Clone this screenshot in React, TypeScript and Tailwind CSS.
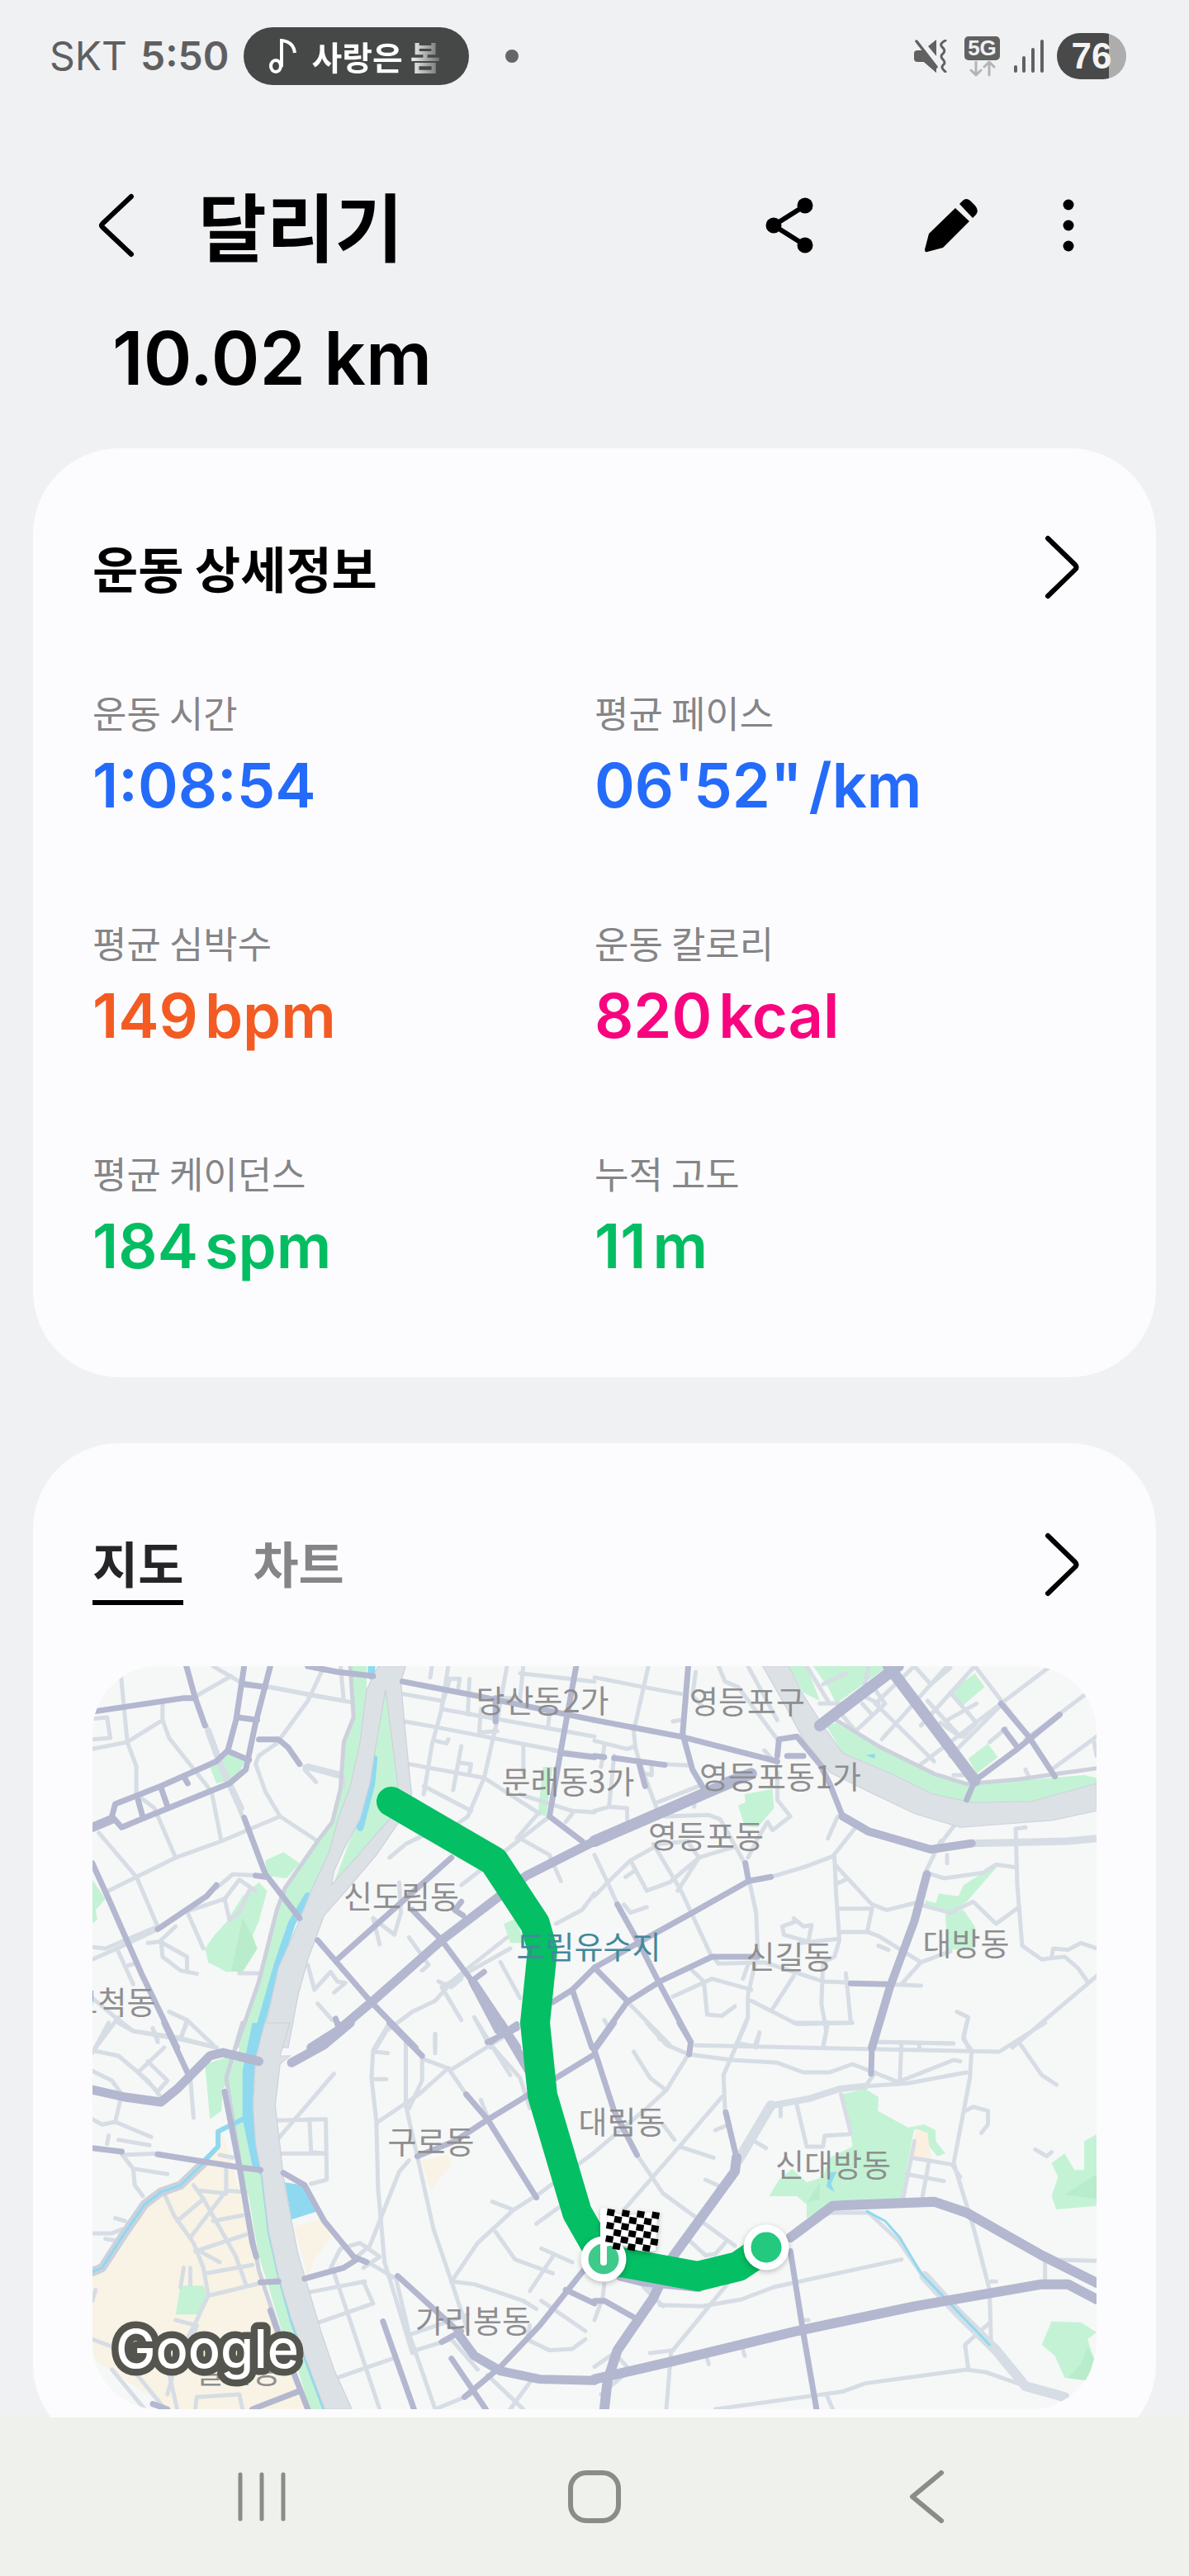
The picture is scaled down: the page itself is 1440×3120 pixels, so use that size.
import type { ReactNode } from "react";

const KR = "font-['Noto_Sans_CJK_KR',sans-serif]";

function Chevron({ dir = "right", className }: { dir?: "left" | "right"; className: string }) {
  return (
    <svg viewBox="0 0 44 80" className={className} fill="none" stroke="currentColor" strokeWidth="6" strokeLinecap="round" strokeLinejoin="round" aria-hidden="true">
      <path d={dir === "right" ? "M5 5 L38 37 Q41 40 38 43 L5 75" : "M40 5 L5 38 Q3 40 5 42 L40 75"} />
    </svg>
  );
}

function StatusBar() {
  return (
    <div className="flex h-[136px] shrink-0 items-center pr-[76px] pl-[60px] text-[#5f5f60]">
      <span className="text-[48px] leading-none">SKT</span>
      <span className="ml-[16px] text-[48px] leading-none font-semibold">5:50</span>
      <div className="ml-[18px] flex h-[70px] items-center rounded-full bg-[#464747] pr-[34px] pl-[30px] text-white">
        <svg viewBox="0 0 34 42" className="h-[42px] w-[34px]" fill="none" stroke="currentColor" strokeWidth="4" aria-hidden="true">
          <ellipse cx="9" cy="33" rx="6" ry="7" />
          <path d="M16 34 V2 C25 3 31 8 32 17" />
        </svg>
        <span className={`${KR} ml-[18px] bg-linear-to-r from-white from-75% to-[#6a6b6b] bg-clip-text text-[40px] leading-[56px] font-bold text-transparent`}>사랑은 봄</span>
      </div>
      <span className="ml-[44px] size-[16px] rounded-full bg-[#666]" />
      <div className="ml-auto flex items-center">
        <svg viewBox="0 0 40 40" className="size-[40px]" aria-hidden="true">
          <path d="M4 13 H9 L27 37 V40 L12 27 H4 Q0 27 0 23 V17 Q0 13 4 13Z M17 8 L27 0 V20Z" fill="#616162" />
          <path d="M7 13 H13 L27 32 V40 L12 27 H5Z" fill="#616162" />
          <path d="M3 2 L27 33" stroke="#616162" strokeWidth="3.5" strokeLinecap="round" />
          <path d="M11 6 L28 28" stroke="#f0f1f3" strokeWidth="2.5" />
          <path d="M38 1 Q30 5 34 9 Q39 13 35 17 Q31 20 35 24 Q39 28 35 31 Q32 34 38 39" fill="none" stroke="#616162" strokeWidth="3" strokeLinecap="round" />
        </svg>
        <div className="ml-[21px] flex w-[43px] flex-col items-center">
          <span className="flex h-[29px] w-full items-center justify-center rounded-[5px] bg-[#616162] font-['Liberation_Sans',sans-serif] text-[26px] leading-none font-bold text-[#f0f1f3]">5G</span>
          <svg viewBox="0 0 32 20" className="h-[20px] w-[32px]" fill="none" stroke="#b4b4b6" strokeWidth="3" strokeLinecap="round" strokeLinejoin="round" aria-hidden="true">
            <path d="M8 2 V18 M2 12 L8 18 L14 12 M24 18 V2 M18 8 L24 2 L30 8" />
          </svg>
        </div>
        <svg viewBox="0 0 38 40" className="ml-[16px] h-[40px] w-[38px]" stroke="#616162" strokeWidth="4" strokeLinecap="round" aria-hidden="true">
          <path d="M3 33 V38 M13 22 V38 M24 12 V38 M35 2 V38" />
        </svg>
        <div className="ml-[15px] flex h-[56px] w-[84px] items-center justify-center rounded-full bg-linear-to-r from-[#494949] from-75% to-[#adadad] to-75% font-['Liberation_Sans',sans-serif] text-[44px] leading-none font-bold text-[#f3f3f4]">76</div>
      </div>
    </div>
  );
}

function Header() {
  return (
    <header className="shrink-0">
      <div className="mt-[87px] flex h-[100px] items-center pr-[134px] pl-[119px]">
        <button type="button" aria-label="뒤로"><Chevron dir="left" className="h-[80px] w-[44px]" /></button>
        <h1 className={`${KR} ml-[77px] pb-[4px] text-[90px] leading-[96px] font-bold`}>달리기</h1>
        <button type="button" aria-label="공유" className="ml-auto">
          <svg viewBox="0 0 60 68" className="h-[68px] w-[60px]" aria-hidden="true">
            <path d="M49 10 L11 34 L49 58" fill="none" stroke="#000" strokeWidth="6" />
            <circle cx="11" cy="34" r="9.500" /><circle cx="49" cy="10" r="9.500" /><circle cx="49" cy="58" r="9.500" />
          </svg>
        </button>
        <button type="button" aria-label="편집" className="ml-[133px]">
          <svg viewBox="0 0 66 66" className="size-[66px]" aria-hidden="true">
            <path d="M38 12 L55 28 L23 60 L4 65 Q1 66 1 62 L6 43Z" />
            <path d="M43 7 L47 3 Q51 -1 56 3 L62 9 Q67 15 63 20 L59 24Z" />
          </svg>
        </button>
        <button type="button" aria-label="더보기" className="ml-[97px]">
          <svg viewBox="0 0 24 64" className="h-[64px] w-[24px]" aria-hidden="true">
            <circle cx="12" cy="7" r="6.500" /><circle cx="12" cy="32" r="6.500" /><circle cx="12" cy="57" r="6.500" />
          </svg>
        </button>
      </div>
      <p className="mt-[61px] pl-[136px] text-[89px] leading-[100px] font-semibold">10.02 km</p>
    </header>
  );
}

const STATS = [
  { label: "운동 시간", value: "1:08:54", unit: "", color: "text-[#256bfa]" },
  { label: "평균 페이스", value: "06'52\"", unit: "/km", color: "text-[#256bfa]" },
  { label: "평균 심박수", value: "149", unit: "bpm", color: "text-[#f45b22]" },
  { label: "운동 칼로리", value: "820", unit: "kcal", color: "text-[#f9047f]" },
  { label: "평균 케이던스", value: "184", unit: "spm", color: "text-[#04bd62]" },
  { label: "누적 고도", value: "11", unit: "m", color: "text-[#04bd62]" },
];

function Details() {
  return (
    <section className="mx-[40px] mt-[59px] shrink-0 rounded-[104px] bg-[#fcfcfe] px-[72px] pt-[94px] pb-[119px]">
      <div className="flex h-[100px] items-center justify-between pr-[20px]">
        <h2 className={`${KR} text-[60px] leading-[80px] font-bold`}>운동 상세정보</h2>
        <button type="button" aria-label="운동 상세정보 열기"><Chevron className="h-[80px] w-[44px]" /></button>
      </div>
      <dl className="mt-[96px] grid grid-cols-2 gap-y-[121px]">
        {STATS.map((s) => (
          <div key={s.label}>
            <dt className={`${KR} text-[45px] leading-[60px] text-[#858587]`}>{s.label}</dt>
            <dd className={`${s.color} mt-[18px] flex gap-[8px] text-[74px] leading-[80px] font-semibold`}>
              <span>{s.value}</span>
              {s.unit && <span>{s.unit}</span>}
            </dd>
          </div>
        ))}
      </dl>
    </section>
  );
}

function Sheet({ x, y, children }: { x: number; y: number; children: ReactNode }) {
  return <g transform={`translate(${x} ${y}) scale(0.3954 0.3333)`}>{children}</g>;
}

function Lines({ color, width, d }: { color: string; width: number; d: string[] }) {
  return (
    <g fill="none" stroke={color} strokeWidth={width} strokeLinecap="round" strokeLinejoin="round">
      {d.map((p) => <polyline key={p} points={p} vectorEffect="non-scaling-stroke" />)}
    </g>
  );
}

function Areas({ color, d }: { color: string; d: string[] }) {
  return <g fill={color}>{d.map((p) => <polygon key={p} points={p} />)}</g>;
}

const MINOR = "#d6dde4";
const MAJOR = "#b3b7cf";
const PARK = "#c3f3d4";
const WATER = "#8fd9f0";
const LAND = "#f8f3e5";
const HIGHWAY = "#dce1e5";
const EDGE = "#ccd1dc";

const NW = { x: -12, y: -18 };
const NE = { x: 608, y: -18 };
const SW = { x: -12, y: 432 };
const SE = { x: 608, y: 432 };

const minorNW = [
  "115,54 137,330 165,420 165,520 220,570 285,750", "30,355 137,330 245,250 245,190", "245,250 265,315 395,510 425,690",
  "30,320 85,315 75,240 30,245", "400,54 480,110 700,160 825,185", "345,165 455,90", "740,54 690,180 610,310", "600,330 540,380 530,410 560,510 605,600 720,690",
  "605,600 425,690 285,750 80,870", "50,660 165,820 230,1000 140,1045 70,1080 30,1075", "230,1010 105,1080 30,1120", "105,1080 155,1210", "130,1145 160,1135",
  "380,270 425,420 490,600", "320,945 370,1080", "320,945 435,900 480,830 530,870", "410,860 460,810 540,815", "435,900 450,975 480,950 510,870",
  "285,1000 240,1050 245,1110 300,1160 350,1172", "200,1060 240,1055", "245,1060 320,1110 320,1160", "480,1170 540,1170", "680,420 800,460 800,490", "680,430 715,475",
  "1120,54 1100,210 1070,340 1045,520", "1070,54 1065,95", "1185,100 1180,230", "980,155 1100,180", "1100,210 1568,310", "985,255 1080,275 1450,360", "1220,210 1215,295 1270,290",
  "1300,54 1270,250 1230,460 1180,600 1110,660", "1350,54 1340,170 1260,170", "1000,410 1230,460", "1350,340 1350,440", "1230,460 1400,590", "1045,490 1190,580", "1100,200 1125,100 1155,100 1150,140",
  "1080,325 1115,335 1120,320", "1160,345 1135,505", "1155,405 1190,410 1185,440", "1568,110 1340,80", "1430,230 1425,280", "1568,585 1500,580 1340,520", "1500,590 1480,620",
  "1568,380 1440,360", "1430,600 1160,850", "1340,680 1430,740 1465,835", "1060,660 990,700 940,750", "1395,590 1330,680", "970,840 975,950 955,1030 890,970", "890,970 910,1065",
  "1000,1040 1060,1140 1040,1160", "1568,880 1530,940 1450,990", "1300,1040 1140,1190 1080,1270 1010,1310 930,1380 900,1440", "1310,1080 1100,1220 1160,1340", "690,1140 710,1230 760,1165 780,1200 805,1205 770,1240",
  "720,1280 765,1340", "1090,1200 1130,1220 1160,1190", "1280,1130 1340,1260", "1200,1330 1250,1440", "1080,1390 1080,1440", "30,1260 100,1330 155,1380 300,1410 410,1440", "110,1330 40,1440", "265,1310 320,1340 400,1430", "320,1340 300,1410",
  "215,1370 230,1420", "575,130 800,180 790,54",
];
const majorNW = [
  "40,218 310,170 345,170", "318,54 345,170 375,270", "495,54 470,250 445,360 410,400 240,490 100,555 90,600 120,640 180,610 450,480 500,430 530,260 575,54", "495,120 560,130", "475,240 535,250",
  "450,365 510,395", "310,455 322,480", "240,495 262,570", "170,540 185,605", "540,320 600,320 630,350 665,410", "690,54 780,75 890,90", "30,640 90,610",
  "495,605 560,810 665,970", "530,815 560,820", "30,770 80,900 180,1170 290,1440", "230,1010 380,890 410,850", "980,110 1200,160 1568,250", "1512,54 1465,360 1430,600 1530,690", "1465,370 1568,385",
  "720,1050 880,1270 1020,1440", "1130,750 780,1120", "1010,940 1100,1050 1200,1210 1330,1440", "1160,910 1140,940 1165,960", "1230,1165 1190,1200 1270,1380", "775,1335 785,1370", "1330,1355 1250,1420", "1568,1150 1500,1230 1440,1275", "1500,1230 1560,1440", "1265,170 1265,255",
];
const minorNE = [
  "0,95 150,130 265,155", "165,54 120,290 125,345 100,355 0,325", "310,75 300,160 330,200", "380,54 400,110 440,130 560,320", "470,54 560,250", "240,255 260,250", "30,345 20,420", "60,380 45,560",
  "0,580 45,565 100,570 100,610", "125,350 140,410 190,570 215,600 350,595 385,610 460,770", "175,410 175,450 140,440", "215,410 290,415", "190,550 330,485", "310,520 305,565", "560,440 560,540 600,600 545,650 530,620 500,680 470,750",
  "0,740 40,840 70,920", "0,890 40,840 110,760 200,700 290,690", "110,760 160,870 230,840 320,750 430,710", "180,700 265,870 355,1100 380,1135 520,1130 700,1200 900,1210 1000,1215", "320,750 255,870", "320,750 290,700", "90,920 110,950 160,930", "95,820 120,800",
  "540,820 640,785 730,745 800,640", "745,600 715,680", "735,745 740,880 750,1050 735,1110 700,1130 695,1280 710,1380 700,1440", "740,780 850,920 895,940 980,915 1090,950 1160,910 1230,990 1300,930", "750,935 850,935 835,1020 870,1035 1000,1130", "755,1020 840,1020", "770,830 740,845",
  "475,840 495,950 500,1090 470,1250 470,1330 430,1440", "610,970 640,1000 665,995 655,1055 580,1030 575,1000 620,980", "630,1060 750,1045", "1090,1090 1000,1130 940,1210", "870,1070 900,1085", "770,1170 785,1350 620,1355 480,1270", "610,1180 545,1300", "470,1140 455,1190", "290,1150 335,1200 345,1320 390,1325 430,1290",
  "240,1255 360,1190 480,1230", "110,1285 230,1430", "30,1340 40,1360", "190,1380 200,1410", "505,1385 495,1440", "1040,730 1110,620", "1060,690 1015,800", "1080,740 1080,770", "1030,810 1070,825 1190,805 1230,775 1290,785", "1320,640 1290,645 1295,850 1310,1070 1370,1120 1400,1115 1440,1110 1480,1150 1510,1200",
  "1400,1115 1405,1080 1450,1085 1490,1060 1538,1080", "1538,1180 1280,1440", "1110,1310 1145,1330 1130,1400 1145,1440", "870,1420 1100,1425", "650,54 720,190", "770,80 700,120", "690,190 750,190", "750,220 800,290 890,190 860,140", "840,54 820,160 870,190", "820,190 850,230",
  "980,54 860,190 1040,400", "1080,54 880,320", "1080,250 1170,190", "1020,180 1120,310 1060,260", "1160,60 1000,270", "1090,150 1170,260 1130,310", "1165,54 1240,170 1330,310", "1250,190 1090,380", "1390,60 1000,410", "1500,160 1320,320", "1538,310 1400,430", "1530,330 1538,380", "1210,330 1260,280", "1170,450 1100,450", "1320,430 1330,455",
  "980,54 1030,120 1090,60", "520,360 560,410",
];
const majorNE = [
  "0,250 265,310 560,400", "287,54 270,300 300,430 340,510", "0,380 30,385", "60,388 215,413", "135,400 155,490", "560,380 565,320 620,310 690,410 720,480 760,600 840,655 1030,720 1155,698", "590,380 640,380",
  "462,770 472,835 540,820", "472,835 300,950 140,1055", "70,920 145,1080 200,1210 295,1420", "0,1150 100,1270", "140,1055 0,1150", "500,1110 360,1110 200,1200 100,1275 0,1440", "785,1207 900,1210", "1245,190 1330,310 1410,455",
  "1425,230 1290,360 1165,470 1140,540", "1255,285 1290,340",
];
const minorSW = [
  "80,0 30,110", "30,100 110,120 200,210 240,270", "110,0 155,30 300,55 410,90", "215,20 230,60", "320,0 300,55", "250,90 170,180 230,250 260,210 200,140", "30,175 90,210 120,260 100,360 60,370 30,350", "100,360 210,415", "330,200 340,345", "80,410 75,440", "110,425 205,445", "120,480 230,475 360,500",
  "125,485 155,530 260,550", "155,530 160,590 185,630", "30,765 90,765 120,750", "100,710 130,720", "70,785 95,790", "250,620 280,700 340,800 370,890 385,990 350,1080", "340,590 370,640 290,720", "440,530 440,610 330,780", "370,640 470,850 500,950", "440,610 500,615", "360,610 440,620", "345,830 500,770", "390,990 600,930", "380,910 520,880", "490,700 400,720", "420,480 460,490",
  "590,355 745,350 748,570 700,585", "695,350 700,470 745,475 610,475", "770,185 600,420", "940,0 890,100 885,200 900,360 905,600 925,870", "895,105 935,110", "895,205 930,205", "990,60 990,300 1030,510 1075,750 1130,940 1180,1120", "1080,45 1080,110", "1040,130 1040,210 1000,310", "1040,130 1130,170 1250,80 1360,0", "1120,165 1030,260 905,360", "1120,165 1175,260", "1210,0 1310,190", "1220,280 1240,340", "1250,80 1340,200 1370,310", "1568,470 1400,620 1320,680 1210,800 1130,940",
  "1000,500 970,540 880,810 830,860", "1255,650 1320,680", "1460,670 1390,730", "1265,760 1325,860 1440,910", "1405,820 1500,870", "1440,850 1370,975", "1130,940 1200,950 1350,1010", "1370,1100 1360,1150 1430,1190 1500,1185 1540,1150", "1405,1010 1540,1120", "1350,1010 1390,1040",
  "860,860 960,930 1000,1130 1080,1404", "765,890 830,1120 910,1404", "925,870 1010,1200", "690,980 865,940", "720,1090 890,1020 860,940", "780,1290 950,1220", "1010,1130 1180,1060", "1020,1190 1130,1150 1210,1260", "1080,1404 1190,1350", "1380,1290 1310,1404", "1240,1280 1350,1404", "760,890 790,820 850,800 910,850 860,890", "345,1404 350,1360 480,1350 490,1404",
  "40,970 30,1010", "30,1150 120,1190 260,1250 290,1404", "140,1240 250,1400", "90,1260 190,1404", "130,1220 290,1210", "350,1080 290,1220 260,1350", "285,1080 350,1100 320,1200", "310,890 300,960", "330,890 330,950", "360,830 420,870",
];
const majorSW = [
  "250,0 325,190", "30,455 120,468", "230,478 480,525 545,535", "435,250 480,520 520,800 532,850", "615,545 680,590 740,720 830,850 870,870", "840,860 800,890 680,930", "545,943 600,940",
  "940,0 1040,120", "1175,260 1240,350 1390,635", "1025,485 1140,430 1230,360 1568,115", "780,0 800,20", "1240,70 1330,20", "1280,0 1370,180", "965,920 1150,1120", "1100,1160 1160,1120", "575,1045 600,1130 690,1404", "920,1085 1015,1404", "1130,1220 1235,1404", "1568,850 1400,1100 1280,1250 1170,1360", "520,1404 660,1340", "215,1385 260,1404", "1480,970 1568,1020",
];
const minorSE = [
  "160,0 220,80 290,115 420,135 560,145 640,180 720,180 790,150 930,215 1100,135 1120,140", "465,0 395,190 400,320", "440,75 490,85 505,40", "310,82 720,92 1240,105 1380,0", "715,0 700,90", "610,0 790,0", "870,70 1095,75", "940,80 935,215", "995,80 995,95", "1140,0 1130,60 1155,100 1150,200 1100,510 1160,740 1210,970 1215,1180", "1300,70 1370,190 1415,225",
  "860,180 830,230", "830,230 960,220 1140,180", "120,105 170,200 220,245 290,110", "220,245 160,310 0,470", "390,270 260,450 90,680", "260,450 365,490", "210,370 245,425", "130,480 210,620 430,810", "570,300 570,340", "620,300 650,450 700,450 705,410 780,405", "755,260 785,400", "490,430 525,455", "340,570 385,595", "370,390 400,375",
  "290,790 340,845 370,840 400,800", "980,430 970,490 1095,515", "970,490 945,640", "955,550 1070,575", "1025,500 1005,630", "1135,320 1160,305 1205,320 1205,370 1185,400", "1350,460 1385,485 1400,470", "1095,515 1120,560",
  "600,770 720,690 840,690 930,790 1000,910", "200,1025 330,1030 450,1005 550,960 940,860", "420,930 330,1060 240,1190", "170,1200 240,1190", "200,970 150,960 210,1030", "30,950 25,1000 0,1080", "235,1190 220,1404", "370,1404 760,1340 830,1310 1140,1260 1200,1270 1320,1320", "710,1350 730,1404", "1145,1260 1135,1170 1210,1090", "1380,870 1380,930", "1400,860 1538,865",
  "640,1080 655,1080", "455,1190 460,1210", "345,1220 350,1240", "1215,940 1230,940", "0,1250 60,1200 100,1250", "20,1350 110,1260",
];
const majorSE = [
  "260,0 295,70 290,115", "0,100 60,320 130,480", "0,100 60,0", "870,0 850,80 847,185", "402,325 435,490", "600,830 640,1130 680,1404", "0,1010 30,1010 120,1070",
];

const LABELS = [
  ["당산동2가", 545, 42], ["영등포구", 793, 43], ["문래동3가", 576, 140], ["영등포동1가", 833, 134], ["영등포동", 743, 206], ["신도림동", 374, 279],
  ["신길동", 844, 352], ["대방동", 1058, 336], ["고척동", 24, 407], ["구로동", 410, 576], ["대림동", 641, 552], ["신대방동", 897, 604], ["가리봉동", 461, 793], ["철산동", 176, 854],
] as const;

const FLAG_CELLS = Array.from({ length: 42 }, (_, i) => ({ c: i % 7, r: Math.floor(i / 7) })).filter(({ c, r }) => (c + r) % 2 === 0);

function RouteMap() {
  return (
    <svg viewBox="0 0 1216 900" className="block w-full rounded-[80px] bg-[#f6f7f7]" role="img" aria-label="달리기 경로 지도">
      <Sheet {...NW}>
        <Areas color={PARK} d={[
          "820,54 870,54 870,140 850,330 820,490 755,730 700,870 660,960 540,1440 470,1440 540,1200 595,940 620,860 720,690 765,620 790,500 800,330 830,240",
          "450,370 500,395 470,465 410,480 390,420", "560,760 615,730 665,770 625,825 565,815", "540,840 565,870 540,980 520,1035 535,1080 490,1165 440,1165 385,1130 375,1080 405,1030 440,985 490,890", "30,830 70,900 40,940 45,975 30,990", "1410,420 1440,420 1420,600 1395,590", "1290,990 1330,970 1350,1060 1310,1060",
        ]} />
        <Areas color="#b8ecca" d={["490,970 520,1035 535,1080 490,1165 455,1160 465,1110"]} />
      </Sheet>
      <Sheet {...NE}>
        <Areas color={PARK} d={[
          "595,54 650,54 690,180 640,150", "670,54 900,54 740,190 715,130", "710,270 740,260 870,350 1040,450 1140,485 1300,470 1500,450 1538,460 1538,480 1340,545 1160,550 1040,520 900,440 760,370", "1090,145 1165,80 1195,130 1130,195", "1145,390 1205,335 1235,385 1170,445",
          "460,520 545,500 550,570 500,640 460,635 440,560 462,550", "1190,805 1235,780 1140,910 1090,950 1010,930 1015,905 1045,915 1055,880 1115,890 1130,850", "1075,955 1130,940 1165,1000 1165,1080 1080,1085",
        ]} />
      </Sheet>
      <Sheet {...SW}>
        <Areas color={LAND} d={["425,390 460,520 500,700 540,870 570,1000 600,1130 690,1404 270,1404 30,1220 30,900 60,890 120,780 200,640 310,590 380,500 410,450", "645,740 740,710 760,780 710,860 690,920 670,830", "1035,500 1120,480 1130,510 1068,610"]} />
        <Areas color={PARK} d={["375,150 440,125 490,150 430,240 425,320 390,350", "300,955 370,955 385,1010 350,1060 285,1060", "505,0 470,130 440,220 455,310 480,500 510,640 540,850 570,960 610,1120 660,1260 695,1404 735,1404 690,1240 640,1080 600,920 570,760 550,560 520,480 495,340 490,170 520,0"]} />
        <Areas color={WATER} d={["520,0 560,0 530,130 522,300 530,440 550,560 520,520 490,350 490,170", "620,580 675,590 720,685 640,715"]} />
      </Sheet>
      <Sheet {...SE}>
        <Areas color={PARK} d={["755,260 830,240 870,270 868,320 960,380 1010,370 1045,390 1045,430 1075,475 1050,485 1020,440 980,385 970,440 940,640 720,660 650,710 650,660 620,630 535,630 565,570 605,530 650,580 700,560 720,490 790,450 780,350", "1538,405 1538,665 1415,678 1400,630 1420,560 1400,510 1440,475 1470,535 1500,535 1500,430", "1400,1085 1490,1088 1538,1125 1510,1150 1530,1220 1510,1300 1440,1290 1410,1210 1370,1170"]} />
        <Areas color="#b8ecca" d={["1538,550 1538,640 1440,625", "690,580 690,640 650,655", "1510,1180 1530,1220 1510,1300 1450,1290 1490,1240"]} />
        <Areas color="#fbefe0" d={["985,385 1020,400 1030,490 970,490"]} />
        <Areas color={WATER} d={["720,545 742,540 725,585 735,615 710,595"]} />
      </Sheet>

      <Sheet {...NW}><Lines color={MINOR} width={5} d={minorNW} /><Lines color={MINOR} width={8} d={["385,290 425,420 485,570", "690,420 790,450"]} /></Sheet>
      <Sheet {...NE}><Lines color={MINOR} width={5} d={minorNE} /><Areas color={WATER} d={["830,378 860,372 858,390"]} /></Sheet>
      <Sheet {...SW}><Lines color={MINOR} width={5} d={minorSW} /></Sheet>
      <Sheet {...SE}><Lines color={MINOR} width={5} d={minorSE} /></Sheet>

      <Sheet {...NW}>
        <Lines color={EDGE} width={5} d={["820,54 830,240 800,330 790,500 765,620 720,690 620,860 595,940 540,1200 470,1440"]} />
        <Areas color={PARK} d={["928,120 965,480 955,600 762,860 700,870 770,840 860,560 890,330"]} />
        <Lines color={WATER} width={9} d={["885,54 885,90", "892,390 885,480 850,640", "690,890 640,990 597,1140 525,1440"]} />
        <path fillRule="evenodd" fill={HIGHWAY} stroke={EDGE} strokeWidth="3" d="M905 54 L870 140 L850 330 L820 490 L785 600 L755 730 L700 870 L660 990 L600 1150 L545 1440 L630 1440 L660 1250 L690 1120 L740 960 L800 880 L900 740 L975 610 L1008 520 L1000 430 L985 250 L975 110 L990 54 Z M928 140 L965 480 L955 590 L910 650 L830 760 L762 850 L770 800 L800 720 L850 610 L880 480 L900 330 Z" />
      </Sheet>
      <Sheet {...SW}>
        <Lines color={EDGE} width={5} d={["490,0 440,200 455,310 500,640 540,900 610,1150 690,1404"]} />
        <Lines color={EDGE} width={11} d={["370,510 300,590 240,615 190,660 120,780 60,890 30,905"]} />
        <Lines color={WATER} width={3} d={["370,510 300,590 240,615 190,660 120,780 60,890 30,905", "550,560 570,760 600,920 640,1090 690,1250 738,1404"]} />
        <Lines color={WATER} width={6} d={["500,345 415,395 415,450 370,505"]} />
        <path fill={HIGHWAY} stroke={EDGE} strokeWidth="3" d="M558 0 L530 130 L522 300 L530 440 L550 560 L570 760 L600 920 L640 1080 L690 1240 L742 1404 L825 1404 L770 1260 L730 1120 L690 960 L660 840 L640 720 L615 560 L605 450 L590 300 L605 150 L635 120 L605 120 L635 0 Z" />
      </Sheet>
      <Sheet {...NE}>
        <path fill={HIGHWAY} stroke={EDGE} strokeWidth="3" d="M515 54 L595 54 L640 160 L700 270 L760 370 L900 440 L1040 520 L1160 550 L1340 545 L1538 480 L1538 580 L1400 615 L1120 640 L980 590 L840 510 L720 440 L640 320 L590 210 Z" />
        <Lines color={EDGE} width={5} d={["740,250 870,345 1040,445 1140,482 1300,465 1538,425"]} />
        <Lines color={MINOR} width={9} d={["1155,698 1450,690 1538,680"]} />
        <Lines color={MAJOR} width={14} d={["930,54 690,270", "900,54 1165,470", "0,690 350,510 420,475", "400,480 480,445"]} />
        <Lines color={MAJOR} width={10} d={["1018,810 980,980 905,1220 850,1440", "760,600 840,655 1030,720 1155,698"]} />
      </Sheet>
      <Sheet {...NW}><Lines color={MAJOR} width={7} d={majorNW} /><Lines color={MAJOR} width={11} d={["1568,690 1360,815 1100,1050 890,1270 780,1380 700,1440", "30,640 90,610", "1200,1210 1330,1440"]} /></Sheet>
      <Sheet {...NE}><Lines color={MAJOR} width={7} d={majorNE} /></Sheet>
      <Sheet {...SW}><Lines color={MAJOR} width={7} d={majorSW} /><Lines color={MAJOR} width={11} d={["820,0 740,80 640,145", "1150,1130 1200,1210 1280,1265 1400,1295 1568,1300", "30,243 130,270 240,288 290,240 390,120 430,108 540,140", "1280,0 1370,180"]} /></Sheet>
      <Sheet {...SE}>
        <Lines color={MINOR} width={12} d={["1010,920 1110,1050 1230,1190 1320,1320 1440,1360", "540,300 440,500"]} />
        <Lines color={MINOR} width={8} d={["830,230 750,240 660,275 545,300"]} />
        <Lines color={WATER} width={3} d={["835,685 890,720 935,780 1000,910 1210,1170"]} />
        <Lines color={MAJOR} width={7} d={majorSE} />
        <Lines color={MAJOR} width={12} d={["435,490 430,540 240,850 180,1000 70,1190 40,1300 30,1404", "0,1295 240,1230 620,1120 980,1030 1370,950 1450,950 1538,1005", "600,780 730,665 1040,650 1140,690 1370,845 1538,945", "80,920 150,940 320,960"]} />
      </Sheet>

      <g fill="none" stroke="#04bf64" strokeWidth="36" strokeLinecap="round" strokeLinejoin="round">
        <polyline points="362,164 486,236 536,312 545,344 536,432 545,520 587,662 619,718 733,739 782,727 816,704" />
      </g>
      <g fill="#8e8e90" fontSize="38" textAnchor="middle" className={KR}>
        {LABELS.map(([name, x, y]) => <text key={name} x={x} y={y + 14}>{name}</text>)}
        <text x="601" y="354" fill="#43889a">도림유수지</text>
      </g>
      <g className="drop-shadow-[0_2px_3px_rgba(0,0,0,0.25)]">
        <circle cx="619" cy="718" r="23" fill="#3fc98a" stroke="#fff" strokeWidth="9" />
        <circle cx="816" cy="704" r="23" fill="#22c97f" stroke="#fff" strokeWidth="9" />
        <path d="M619 660 V722" stroke="#fff" strokeWidth="8" strokeLinecap="round" />
        <g transform="translate(624 657) rotate(10)">
          <path d="M0 0 Q16 8 32 2 T60 -6 L66 40 Q50 46 36 42 T5 46Z" fill="#fff" />
          {FLAG_CELLS.map(({ c, r }) => <rect key={`${c}-${r}`} x={c * 9 + r} y={r * 8 - c} width="9" height="8" fill="#000" />)}
        </g>
      </g>
      <text x="28" y="850" fontSize="65" fill="#fff" stroke="#555550" strokeWidth="17" strokeLinejoin="round" paintOrder="stroke" className="font-['Inter',sans-serif] font-medium">Google</text>
    </svg>
  );
}

function MapCard() {
  return (
    <section className="mx-[40px] mt-[80px] shrink-0 rounded-[104px] bg-[#fcfcfe] px-[72px] pt-[98px] pb-[50px]">
      <div className="flex items-center justify-between pr-[20px]">
        <div role="tablist" className={`${KR} flex gap-[84px] text-[60px] leading-[92px] font-bold`}>
          <button type="button" role="tab" aria-selected="true" className="border-b-[6px] border-black text-[#252527]">지도</button>
          <button type="button" role="tab" aria-selected="false" className="border-b-[6px] border-transparent text-[#858587]">차트</button>
        </div>
        <button type="button" aria-label="지도 열기"><Chevron className="h-[80px] w-[44px]" /></button>
      </div>
      <div className="mt-[74px]"><RouteMap /></div>
    </section>
  );
}

function NavBar() {
  return (
    <nav className="flex h-[192px] shrink-0 items-center justify-around bg-[#eff1ec] px-[116px] text-[#8a8d86]">
      <button type="button" aria-label="최근 앱">
        <svg viewBox="0 0 64 64" className="size-[64px]" stroke="currentColor" strokeWidth="5" strokeLinecap="round" aria-hidden="true"><path d="M6 5 V59 M32 5 V59 M58 5 V59" /></svg>
      </button>
      <button type="button" aria-label="홈">
        <svg viewBox="0 0 64 64" className="size-[64px]" fill="none" stroke="currentColor" strokeWidth="6" aria-hidden="true"><rect x="3" y="3" width="58" height="58" rx="19" /></svg>
      </button>
      <button type="button" aria-label="뒤로 가기">
        <svg viewBox="0 0 64 64" className="size-[64px]" fill="none" stroke="currentColor" strokeWidth="6" strokeLinecap="round" strokeLinejoin="round" aria-hidden="true"><path d="M49 3 L14 32 L49 61" /></svg>
      </button>
    </nav>
  );
}

export default function App() {
  return (
    <div className="flex h-screen flex-col bg-[#f0f1f3] font-['Inter','Noto_Sans_CJK_KR',sans-serif] text-black">
      <StatusBar />
      <main className="flex min-h-0 flex-1 flex-col overflow-y-auto [scrollbar-width:none]">
        <Header />
        <Details />
        <MapCard />
      </main>
      <NavBar />
    </div>
  );
}
